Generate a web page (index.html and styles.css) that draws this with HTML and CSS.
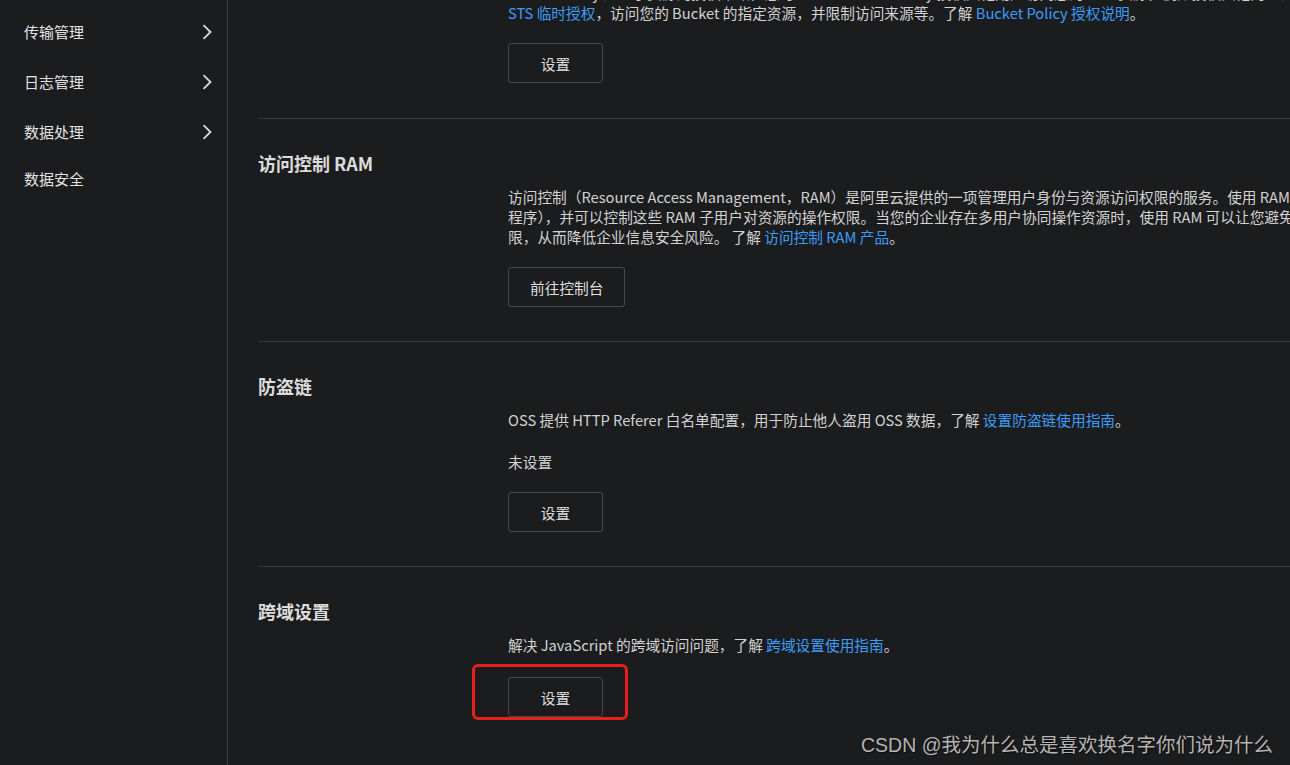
FILE: index.html
```html
<!DOCTYPE html>
<html lang="zh-CN">
<head>
<meta charset="utf-8">
<title>Bucket 权限管理</title>
<link rel="stylesheet" href="styles.css">
</head>
<body>
<div class="layout">
  <aside class="sidebar">
    <ul class="menu">
      <li class="menu-item has-sub"><span>传输管理</span><svg class="chev" viewBox="0 0 10 16" width="10" height="16"><path d="M1.5 1.2 L8.5 8 L1.5 14.8" fill="none" stroke="currentColor" stroke-width="1.8"/></svg></li>
      <li class="menu-item has-sub"><span>日志管理</span><svg class="chev" viewBox="0 0 10 16" width="10" height="16"><path d="M1.5 1.2 L8.5 8 L1.5 14.8" fill="none" stroke="currentColor" stroke-width="1.8"/></svg></li>
      <li class="menu-item has-sub"><span>数据处理</span><svg class="chev" viewBox="0 0 10 16" width="10" height="16"><path d="M1.5 1.2 L8.5 8 L1.5 14.8" fill="none" stroke="currentColor" stroke-width="1.8"/></svg></li>
      <li class="menu-item leaf"><span>数据安全</span></li>
    </ul>
  </aside>
  <main class="content">
    <section class="block block-first">
      <div class="block-body">
        <p class="desc">Bucket Policy 是基于资源的授权策略，您可以通过 Bucket Policy 授权其他用户访问您的 OSS 资源，例如授权其他阿里云账号、RAM 用户或<br><a class="link">STS 临时授权</a>，访问您的 Bucket 的指定资源，并限制访问来源等。了解 <a class="link">Bucket Policy 授权说明</a>。</p>
        <button class="btn">设置</button>
      </div>
    </section>
    <section class="block">
      <h2 class="block-title">访问控制 RAM</h2>
      <div class="block-body">
        <p class="desc">访问控制（Resource Access Management，RAM）是阿里云提供的一项管理用户身份与资源访问权限的服务。使用 RAM，您可以创建、管理 RAM 子用户（例如员工、系统或应用<br>程序），并可以控制这些 RAM 子用户对资源的操作权限。当您的企业存在多用户协同操作资源时，使用 RAM 可以让您避免与其他用户共享云账号密钥，按需为用户分配最小权<br>限，从而降低企业信息安全风险。 了解 <a class="link">访问控制 RAM 产品</a>。</p>
        <button class="btn">前往控制台</button>
      </div>
    </section>
    <section class="block">
      <h2 class="block-title">防盗链</h2>
      <div class="block-body">
        <p class="desc desc-gap">OSS 提供 HTTP Referer 白名单配置，用于防止他人盗用 OSS 数据，了解 <a class="link">设置防盗链使用指南</a>。</p>
        <p class="desc">未设置</p>
        <button class="btn">设置</button>
      </div>
    </section>
    <section class="block">
      <h2 class="block-title">跨域设置</h2>
      <div class="block-body">
        <p class="desc desc-gap">解决 JavaScript 的跨域访问问题，了解 <a class="link">跨域设置使用指南</a>。</p>
        <div class="btn-wrap">
          <button class="btn">设置</button>
          <span class="mark"></span>
        </div>
      </div>
    </section>
  </main>
</div>
<div class="watermark">CSDN @我为什么总是喜欢换名字你们说为什么</div>
</body>
</html>
```
FILE: styles.css
```css
html, body {
  margin: 0;
  padding: 0;
  background: #1b1c1e;
  overflow: hidden;
}
body {
  width: 1290px;
  height: 765px;
  position: relative;
  font-family: "Noto Sans CJK SC", "Noto Sans", sans-serif;
  color: #d4d4d4;
}
.layout {
  display: flex;
  height: 765px;
}
.sidebar {
  width: 227px;
  flex: 0 0 227px;
  border-right: 1px solid #38393c;
}
.menu {
  list-style: none;
  margin: 0;
  padding: 7px 0 0;
}
.menu-item {
  height: 50px;
  display: flex;
  align-items: center;
  justify-content: space-between;
  padding: 0 15px 0 24px;
  font-size: 15px;
  line-height: 20px;
  color: #e4e4e4;
}
.menu-item.leaf {
  height: 44px;
}
.chev {
  color: #dadada;
  display: block;
}
.content {
  flex: 1;
  min-width: 0;
  padding-left: 30px;
  margin-top: -17px;
}
.block {
  border-bottom: 1px solid #38393c;
  padding: 32px 0 34px;
}
.block:last-child {
  border-bottom: none;
}
.block-first {
  padding-top: 0;
  padding-bottom: 35px;
}
.block-title {
  margin: 0 0 12px;
  font-size: 18px;
  line-height: 24px;
  font-weight: 700;
  color: #dcdcdc;
}
.block-body {
  margin-left: 250px;
}
.desc {
  margin: 0 0 20px;
  font-size: 14.7px;
  line-height: 20px;
  white-space: nowrap;
  color: #d2d2d2;
}
.desc-gap {
  margin-bottom: 22px;
}
.link {
  color: #3d9cf9;
}
.btn {
  display: block;
  box-sizing: border-box;
  height: 40px;
  min-width: 95px;
  padding: 0 21px;
  background: transparent;
  border: 1px solid #47484b;
  border-radius: 3px;
  color: #dedede;
  font-family: inherit;
  font-size: 14.7px;
}
.btn-wrap {
  position: relative;
  display: inline-block;
}
.mark {
  position: absolute;
  left: -36px;
  top: -13px;
  width: 156px;
  height: 56px;
  box-sizing: border-box;
  border: 3px solid #e8201c;
  border-radius: 6px;
}
.watermark {
  position: absolute;
  right: 17px;
  bottom: 8px;
  font-family: "Liberation Sans", "Noto Sans CJK SC", sans-serif;
  font-size: 19.5px;
  line-height: 24px;
  color: #b4b4b4;
  text-shadow: 1px 1px 1px rgba(0, 0, 0, 0.6);
}
```
